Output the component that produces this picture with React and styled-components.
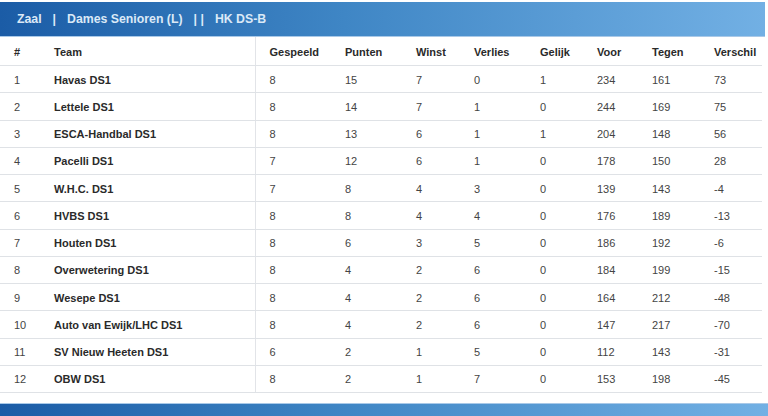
import React from "react";
import styled, { createGlobalStyle } from "styled-components";

const GlobalStyle = createGlobalStyle`
  body {
    margin: 0;
    background: #ffffff;
    font-family: "Liberation Sans", Arial, sans-serif;
  }
`;

const columns = [
  { key: "pos", label: "#", width: 46 },
  { key: "team", label: "Team", width: 209, divider: true },
  { key: "played", label: "Gespeeld", width: 76 },
  { key: "points", label: "Punten", width: 71 },
  { key: "won", label: "Winst", width: 58 },
  { key: "lost", label: "Verlies", width: 66 },
  { key: "draw", label: "Gelijk", width: 57 },
  { key: "for", label: "Voor", width: 55 },
  { key: "against", label: "Tegen", width: 62 },
  { key: "diff", label: "Verschil", width: 62 },
];

const rows = [
  [1, "Havas DS1", 8, 15, 7, 0, 1, 234, 161, 73],
  [2, "Lettele DS1", 8, 14, 7, 1, 0, 244, 169, 75],
  [3, "ESCA-Handbal DS1", 8, 13, 6, 1, 1, 204, 148, 56],
  [4, "Pacelli DS1", 7, 12, 6, 1, 0, 178, 150, 28],
  [5, "W.H.C. DS1", 7, 8, 4, 3, 0, 139, 143, -4],
  [6, "HVBS DS1", 8, 8, 4, 4, 0, 176, 189, -13],
  [7, "Houten DS1", 8, 6, 3, 5, 0, 186, 192, -6],
  [8, "Overwetering DS1", 8, 4, 2, 6, 0, 184, 199, -15],
  [9, "Wesepe DS1", 8, 4, 2, 6, 0, 164, 212, -48],
  [10, "Auto van Ewijk/LHC DS1", 8, 4, 2, 6, 0, 147, 217, -70],
  [11, "SV Nieuw Heeten DS1", 6, 2, 1, 5, 0, 112, 143, -31],
  [12, "OBW DS1", 8, 2, 1, 7, 0, 153, 198, -45],
];

export default function App() {
  return (
    <>
      <GlobalStyle />
      <Page>
        <TitleBar>
          <span>Zaal</span>
          <Sep>|</Sep>
          <span>Dames Senioren (L)</span>
          <Sep>||</Sep>
          <span>HK DS-B</span>
        </TitleBar>
        <Table>
          <colgroup>
            {columns.map((c) => (
              <col key={c.key} style={{ width: c.width }} />
            ))}
          </colgroup>
          <thead>
            <tr>
              {columns.map((c) => (
                <Th key={c.key} $divider={c.divider}>
                  {c.label}
                </Th>
              ))}
            </tr>
          </thead>
          <tbody>
            {rows.map((r) => (
              <tr key={r[0]}>
                {r.map((v, i) => (
                  <Td
                    key={columns[i].key}
                    $bold={i === 1}
                    $divider={columns[i].divider}
                  >
                    {v}
                  </Td>
                ))}
              </tr>
            ))}
          </tbody>
        </Table>
        <FooterBar />
      </Page>
    </>
  );
}

const Page = styled.div`
  width: 768px;
  padding-top: 2px;
`;

const TitleBar = styled.div`
  height: 35px;
  width: 765px;
  box-sizing: border-box;
  display: flex;
  align-items: center;
  gap: 11px;
  padding-left: 17px;
  background: linear-gradient(to right, #1b5ca6 0%, #3f86c5 45%, #72b0e4 100%);
  border-bottom: 1px solid #a9c9e8;
  color: #dbe9f7;
  font-size: 12.3px;
  font-weight: bold;
`;

const Sep = styled.span`
  font-weight: bold;
  letter-spacing: 3.5px;
  margin-right: -3.5px;
`;

const Table = styled.table`
  width: 762px;
  border-collapse: collapse;
  table-layout: fixed;
  color: #333;
  font-size: 11px;
`;

const Th = styled.th`
  height: 27px;
  padding: 1px 0 0 14px;
  text-align: left;
  font-weight: bold;
  font-size: 11px;
  color: #2a2a2a;
  border-bottom: 1px solid #dfe2e6;
  border-right: ${(p) => (p.$divider ? "1px solid #e2e4e8" : "none")};
  &:nth-child(2) {
    padding-left: 8px;
  }
`;

const Td = styled.td`
  height: 25.25px;
  padding: 1px 0 0 14px;
  text-align: left;
  font-weight: ${(p) => (p.$bold ? "bold" : "normal")};
  color: ${(p) => (p.$bold ? "#2a2a2a" : "#444")};
  border-bottom: 1px solid #dfe2e6;
  border-right: ${(p) => (p.$divider ? "1px solid #e2e4e8" : "none")};
  white-space: nowrap;
  &:nth-child(2) {
    padding-left: 8px;
  }
`;

const FooterBar = styled.div`
  margin-top: 10px;
  height: 14px;
  background: linear-gradient(to right, #1b5ca6 0%, #3f86c5 45%, #72b0e4 100%);
  border-top: 1px solid #a9c9e8;
`;
